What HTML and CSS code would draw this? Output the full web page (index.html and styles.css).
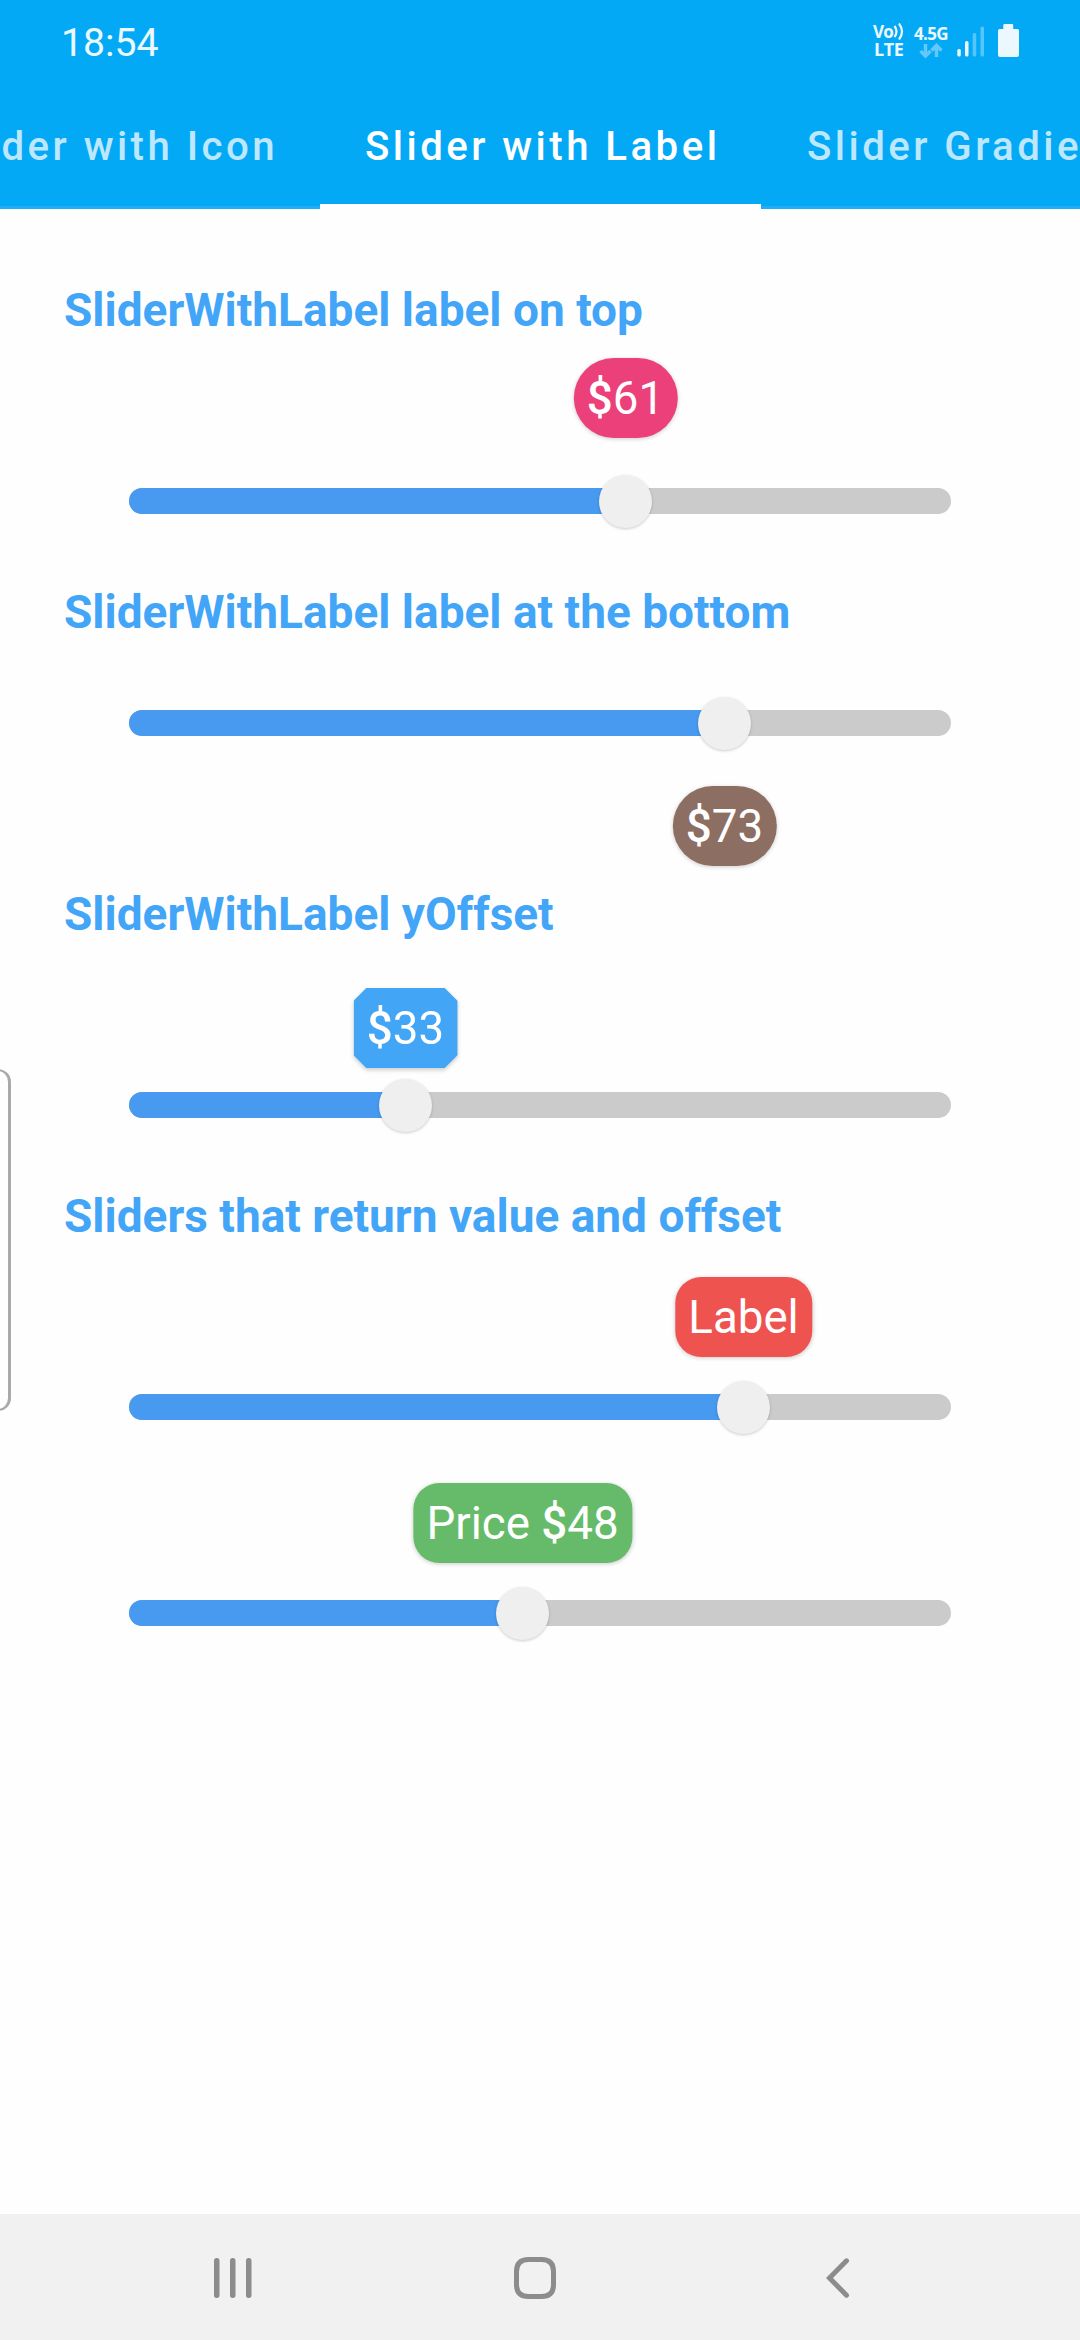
FILE: index.html
```html
<!DOCTYPE html>
<html lang="en">
<head>
<meta charset="utf-8">
<title>Slider with Label</title>
<link rel="stylesheet" href="styles.css">
</head>
<body>
<div class="screen">
  <header class="header">
    <div class="status">
      <span class="time">18:54</span>
      <div class="status-icons">
        <div class="volte">
          <span class="vo">Vo<svg width="11" height="17" viewBox="0 0 11 17" fill="none" stroke="#ecf8ff" stroke-width="2.200"><path d="M1.500 3q4 5.500 0 11M6 .5q6 8 0 16"/></svg></span>
          <span class="lte">LTE</span>
        </div>
        <div class="network">
          <span>4.5G</span>
          <svg width="24" height="16" viewBox="0 0 24 16" fill="none" stroke="#64c9fa" stroke-width="3.400"><path d="M6.500 1v12M1.500 8l5 5 5-5M17.500 14V2.500M12.500 7.500l5-5 5 5"/></svg>
        </div>
        <svg class="signal" width="28" height="32" viewBox="0 0 28 32">
          <rect x="0.300" y="24" width="3.500" height="7.500" rx="1.500" fill="#ecf8ff"/>
          <rect x="8" y="16" width="3.500" height="15.500" rx="1.500" fill="#ecf8ff"/>
          <rect x="15.700" y="8" width="3.500" height="23.500" rx="1.500" fill="#56c5fa"/>
          <rect x="23.500" y="1.500" width="3.500" height="30" rx="1.500" fill="#56c5fa"/>
        </svg>
        <svg class="battery" width="21" height="33" viewBox="0 0 21 33" fill="#ecf8ff"><path d="M6.500 0h7.500q1.200 0 1.200 1.200V5h4.300q1.500 0 1.500 1.500v24.500q0 2-2 2H2q-2 0-2-2V6.500Q0 5 1.500 5h3.800V1.200Q5.300 0 6.500 0Z"/></svg>
      </div>
    </div>
    <nav class="tabs">
      <div class="tab tab-prev">Slider with Icon</div>
      <div class="tab tab-active">Slider with Label</div>
      <div class="tab">Slider Gradient</div>
    </nav>
  </header>

  <main class="content">
    <section class="section">
      <h2>SliderWithLabel label on top</h2>
      <div class="slider">
        <div class="fill" style="width:496px"></div>
        <div class="thumb" style="left:496.500px"><span class="label pill pink above"><span class="currency">$</span>61</span></div>
      </div>
    </section>
    <section class="section label-under">
      <h2>SliderWithLabel label at the bottom</h2>
      <div class="slider">
        <div class="fill" style="width:595px"></div>
        <div class="thumb" style="left:595.500px"><span class="label pill brown below"><span class="currency">$</span>73</span></div>
      </div>
    </section>
    <section class="section">
      <h2>SliderWithLabel yOffset</h2>
      <div class="slider">
        <div class="fill" style="width:276px"></div>
        <div class="thumb" style="left:276.500px"><span class="label blue close"><span class="cut"><span class="currency">$</span>33</span></span></div>
      </div>
    </section>
    <section class="section last">
      <h2>Sliders that return value and offset</h2>
      <div class="slider">
        <div class="fill" style="width:614px"></div>
        <div class="thumb" style="left:614.500px"><span class="label red mid">Label</span></div>
      </div>
      <div class="slider">
        <div class="fill" style="width:393px"></div>
        <div class="thumb" style="left:393.500px"><span class="label green mid">Price <span class="currency">$</span>48</span></div>
      </div>
    </section>
  </main>

  <footer class="navbar">
    <svg width="38" height="40" viewBox="0 0 38 40" fill="#8c8c8c"><rect x="0" width="5.500" height="40" rx="2.700"/><rect x="16" width="5.500" height="40" rx="2.700"/><rect x="32" width="5.500" height="40" rx="2.700"/></svg>
    <svg class="home" width="42" height="42" viewBox="0 0 42 42" fill="none" stroke="#8c8c8c" stroke-width="5"><path d="M14.500 2.500h13q12 0 12 12v13q0 12-12 12h-13q-12 0-12-12v-13q0-12 12-12Z"/></svg>
    <svg width="24" height="40" viewBox="0 0 24 40" fill="none" stroke="#8c8c8c" stroke-width="5" stroke-linecap="round"><path d="M20.500 2.800L3.500 20l17 17.200"/></svg>
  </footer>
  <div class="edge-handle"></div>
</div>
</body>
</html>
```
FILE: styles.css
```css
* { box-sizing: border-box; }

body {
  margin: 0;
  font-family: Roboto, "Liberation Sans", sans-serif;
}

.screen {
  position: relative;
  display: flex;
  flex-direction: column;
  width: 1080px;
  height: 2340px;
  overflow: hidden;
  background: #fefefe;
}

.header {
  height: 209px;
  background: #04a9f6;
}

.status {
  display: flex;
  justify-content: space-between;
  height: 84px;
  padding: 0 61px;
  color: #ecf8ff;
}

.time {
  font-size: 39.200px;
  line-height: 86px;
}

.status-icons {
  display: flex;
  align-items: flex-start;
  font-family: "Open Sans", "Noto Sans", sans-serif;
  font-weight: 700;
}

.volte {
  display: flex;
  flex-direction: column;
  width: 32px;
  margin: 23px 9px 0 0;
  font-size: 17px;
  line-height: 17px;
}

.vo {
  display: flex;
  letter-spacing: -0.800px;
}

.lte {
  padding-left: 1px;
  font-size: 18px;
  line-height: 18px;
  font-weight: 700;
  letter-spacing: -0.400px;
}

.network {
  display: flex;
  flex-direction: column;
  width: 34px;
  margin: 25px 9px 0 0;
  font-size: 17px;
  line-height: 18px;
  letter-spacing: -0.700px;
}

.network svg { margin: 0 0 0 5px; }
.signal { margin: 25px 13px 0 0; }
.battery { margin-top: 24px; }

.tabs {
  display: grid;
  grid-template-columns: 320px 441px 319px;
  height: 125px;
}

.tab {
  padding-left: 46px;
  overflow: hidden;
  border-bottom: 3px solid #20aff6;
  color: #bce7fd;
  font-size: 40.200px;
  font-weight: 500;
  line-height: 126px;
  letter-spacing: 3.450px;
  white-space: nowrap;
}

.tab-prev {
  display: flex;
  justify-content: flex-end;
  padding: 0 42px 0 0;
}

.tab-active {
  padding-left: 45px;
  border-bottom: 5px solid #fefefe;
  color: #fff;
}

.content {
  flex: 1;
  padding: 75px 129px 0 64px;
}

.section { height: 302px; }

h2 {
  height: 53px;
  margin: 0;
  color: #42a5f7;
  font-size: 46px;
  font-weight: 700;
  line-height: 53px;
  white-space: nowrap;
}

.slider {
  position: relative;
  height: 26px;
  margin: 151px 0 0 65px;
  border-radius: 13px;
  background: #cbcbcb;
}

.label-under .slider { margin-top: 71px; }
.last .slider + .slider { margin-top: 180px; }

.fill {
  height: 26px;
  border-radius: 13px 0 0 13px;
  background: #479aef;
}

.thumb {
  position: absolute;
  top: -13px;
  width: 53px;
  height: 53px;
  margin-left: -26.500px;
  border-radius: 50%;
  background: #efefef;
  box-shadow: 0 1px 3px rgba(0, 0, 0, 0.2);
}

.label {
  position: absolute;
  left: 50%;
  height: 80px;
  padding: 0 13.500px;
  transform: translateX(-50%);
  border-radius: 26px;
  color: #fff;
  font-size: 45.700px;
  line-height: 82px;
  white-space: nowrap;
  box-shadow: 0 1px 4px rgba(0, 0, 0, 0.2);
}

.currency { font-weight: 500; }

.pill { border-radius: 40px; }
.above { top: -117px; }
.below { top: 89px; }
.close { top: -91px; }
.mid { top: -104px; }

.pink { background: #ec407a; }
.brown { background: #8d6e63; }
.red { background: #ef5350; }
.green { background: #66bb6a; }

.blue {
  padding: 0;
  box-shadow: none;
  filter: drop-shadow(0 2px 2px rgba(0, 0, 0, 0.2));
}

.cut {
  display: block;
  height: 80px;
  padding: 0 13.500px;
  background: #42a5f5;
  clip-path: polygon(13px 0, calc(100% - 13px) 0, 100% 13px, 100% 67px, calc(100% - 13px) 100%, 13px 100%, 0 67px, 0 13px);
}

.navbar {
  display: flex;
  align-items: center;
  height: 126px;
  padding: 2px 0 0 214px;
  background: #f1f1f1;
}

.home { margin: 0 270px 0 262px; }

.edge-handle {
  position: absolute;
  left: -20px;
  top: 1069px;
  width: 31px;
  height: 342px;
  border: 2px solid #a9a9a9;
  border-right-width: 3px;
  border-radius: 13px;
}
```
